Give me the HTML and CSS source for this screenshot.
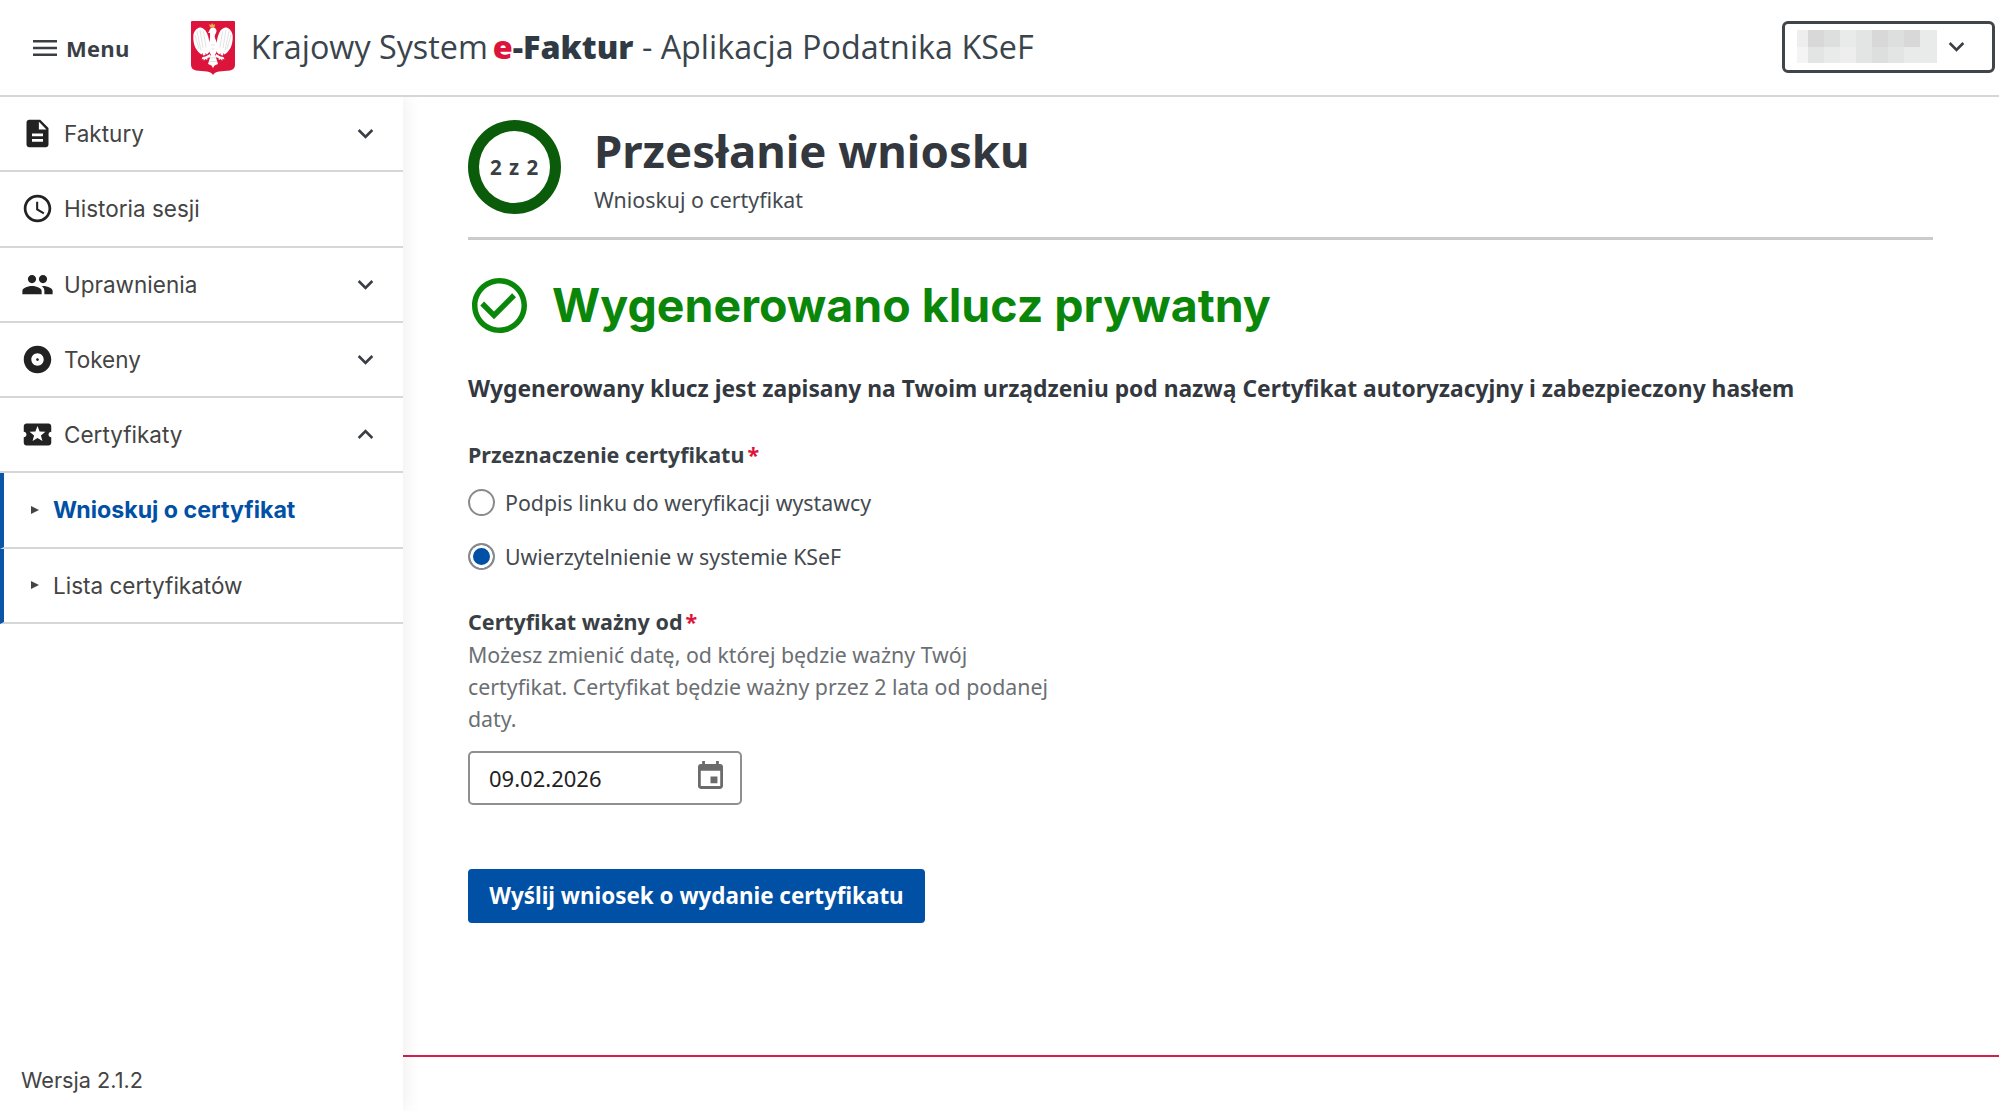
FILE: index.html
```html
<!DOCTYPE html>
<html lang="pl">
<head>
<meta charset="utf-8">
<title>Krajowy System e-Faktur</title>
<link rel="stylesheet" href="styles.css">
</head>
<body>
<div class="app">
  <header class="topbar">
    <button class="menu-btn">
      <svg class="menu-icon" viewBox="0 0 24 16"><path d="M0 0h24v2.500H0zM0 6.700h24v2.500H0zM0 13.500h24V16H0z"/></svg>
      <span>Menu</span>
    </button>
    <svg class="emblem" viewBox="0 0 44 54">
      <path class="shield" d="M1 0h42a1 1 0 0 1 1 1v43c0 3-2 5-5 5.500L28 50.500c-3 .5-5 1.500-6 3.500-1-2-3-3-6-3.500L5 49.500c-3-.5-5-2.500-5-5.500V1a1 1 0 0 1 1-1z"/>
      <path class="crown" d="M19 6.500l-.8-3.500 1.800 1 1.200-2 1.200 2 1.800-1-.8 3.500z"/>
      <g id="half">
        <path class="eagle" d="M18.500 23C18 18 17 13 14.500 9.500 13 7.500 10.500 6 8.500 6.500 5 7.500 2.500 11 2.300 15c-.2 4 .5 8.500 2.200 12 1.500 2.500 3.500 5 6 6.500l1-1.500.5 2.500 2.500-.5-.2-2 1.700 1.500 2.300-2.500z"/>
        <path class="eagle" d="M19 33l-4.500 2.500-3 .5-1 2.500 2-.8.3 2 1.700-1.800 1.700 1 .3-2L20 36z"/>
        <path class="feathers" d="M9 9l3 18M6 10.500l4 19M4 14l4 14M12.500 10.500l2.500 16"/>
      </g>
      <use href="#half" transform="matrix(-1 0 0 1 44 0)"/>
      <path class="eagle" d="M19 13c.5-1-1-1-1.800-1.200 0-.8 1-1.400 1.200-2.300.5-2 2-3 3.600-3 2 0 3.500 1.500 3.500 3.500 0 2-1.800 3.500-1.800 5.500 0 2 2.300 5 2.800 9 .4 3.500-.7 7-2.500 9l3 9.500-3.500 1.500L22 47l-1.500-2.500-3.500-1.500 3-9.500c-1.800-2-2.900-5.500-2.500-9 .4-3.500 2-6 1.500-11.500z"/>
      <path class="feathers" d="M19 37h6M18.500 40.500h7M20.500 28h3M20 24h4"/>
    </svg>
    <h1 class="app-title">Krajowy System<span class="brand"><span class="brand-e">e</span>-Faktur</span> - Aplikacja Podatnika KSeF</h1>
    <div class="account">
      <svg class="account-blur" viewBox="0 0 140 33" preserveAspectRatio="none">
        <rect class="b1" width="11" height="17"/><rect class="b5" x="11" width="16" height="17"/><rect class="b4" x="27" width="16" height="17"/><rect class="b2" x="43" width="16" height="17"/><rect class="b3" x="59" width="16" height="17"/><rect class="b5" x="75" width="16" height="17"/><rect class="b4" x="91" width="16" height="17"/><rect class="b5" x="107" width="16" height="17"/><rect class="b2" x="123" width="17" height="17"/>
        <rect class="b0" y="17" width="11" height="16"/><rect class="b3" x="11" y="17" width="16" height="16"/><rect class="b2" x="27" y="17" width="16" height="16"/><rect class="b1" x="43" y="17" width="16" height="16"/><rect class="b3" x="59" y="17" width="16" height="16"/><rect class="b4" x="75" y="17" width="16" height="16"/><rect class="b3" x="91" y="17" width="16" height="16"/><rect class="b2" x="107" y="17" width="16" height="16"/><rect class="b2" x="123" y="17" width="17" height="16"/>
      </svg>
      <svg class="chev chev-account" viewBox="0 0 24 24"><path d="M16.590 8.590L12 13.170 7.410 8.590 6 10l6 6 6-6z"/></svg>
    </div>
  </header>

  <nav class="sidebar">
    <ul class="nav-list">
      <li class="nav-item">
        <svg class="nav-icon" viewBox="0 0 24 24"><path d="M14 2H6c-1.100 0-1.990.9-1.990 2L4 20c0 1.100.89 2 1.990 2H18c1.100 0 2-.9 2-2V8l-6-6zm2 16H8v-2h8v2zm0-4H8v-2h8v2zm-3-5V3.500L18.500 9H13z"/></svg>
        <span class="nav-label">Faktury</span>
        <svg class="chev" viewBox="0 0 24 24"><path d="M16.590 8.590L12 13.170 7.410 8.590 6 10l6 6 6-6z"/></svg>
      </li>
      <li class="nav-item">
        <svg class="nav-icon" viewBox="0 0 24 24"><path d="M11.990 2C6.470 2 2 6.480 2 12s4.470 10 9.990 10C17.520 22 22 17.520 22 12S17.520 2 11.990 2zM12 20c-4.420 0-8-3.580-8-8s3.580-8 8-8 8 3.580 8 8-3.580 8-8 8zm.5-13H11v6l5.250 3.150.75-1.230-4.500-2.670z"/></svg>
        <span class="nav-label">Historia sesji</span>
      </li>
      <li class="nav-item">
        <svg class="nav-icon" viewBox="0 0 24 24"><path d="M16 11c1.660 0 2.990-1.340 2.990-3S17.660 5 16 5c-1.660 0-3 1.340-3 3s1.340 3 3 3zm-8 0c1.660 0 2.990-1.340 2.990-3S9.660 5 8 5C6.340 5 5 6.340 5 8s1.340 3 3 3zm0 2c-2.330 0-7 1.170-7 3.500V19h14v-2.500c0-2.330-4.670-3.500-7-3.500zm8 0c-.29 0-.62.02-.97.05 1.160.84 1.970 1.970 1.970 3.450V19h6v-2.500c0-2.330-4.670-3.500-7-3.500z"/></svg>
        <span class="nav-label">Uprawnienia</span>
        <svg class="chev" viewBox="0 0 24 24"><path d="M16.590 8.590L12 13.170 7.410 8.590 6 10l6 6 6-6z"/></svg>
      </li>
      <li class="nav-item">
        <svg class="nav-icon" viewBox="0 0 24 24"><path d="M12 2C6.480 2 2 6.480 2 12s4.480 10 10 10 10-4.480 10-10S17.520 2 12 2zm0 14.500c-2.490 0-4.500-2.010-4.500-4.500S9.510 7.500 12 7.500s4.500 2.010 4.500 4.500-2.010 4.500-4.500 4.500zm0-5.500c-.55 0-1 .45-1 1s.45 1 1 1 1-.45 1-1-.45-1-1-1z"/></svg>
        <span class="nav-label">Tokeny</span>
        <svg class="chev" viewBox="0 0 24 24"><path d="M16.590 8.590L12 13.170 7.410 8.590 6 10l6 6 6-6z"/></svg>
      </li>
      <li class="nav-item">
        <svg class="nav-icon" viewBox="0 0 24 24"><path d="M20 12c0-1.100.9-2 2-2V6c0-1.100-.9-2-2-2H4c-1.100 0-1.990.9-1.990 2v4c1.100 0 1.990.9 1.990 2s-.89 2-2 2v4c0 1.100.9 2 2 2h16c1.100 0 2-.9 2-2v-4c-1.100 0-2-.9-2-2zm-4.420 4.800L12 14.500l-3.580 2.300 1.080-4.120-3.290-2.690 4.240-.25L12 5.800l1.540 3.950 4.240.25-3.290 2.690 1.090 4.110z"/></svg>
        <span class="nav-label">Certyfikaty</span>
        <svg class="chev" viewBox="0 0 24 24"><path d="M12 8l-6 6 1.410 1.410L12 10.830l4.590 4.580L18 14z"/></svg>
      </li>
      <li class="nav-item sub active"><span class="tri"></span><span class="nav-label">Wnioskuj o certyfikat</span></li>
      <li class="nav-item sub"><span class="tri"></span><span class="nav-label">Lista certyfikatów</span></li>
    </ul>
    <div class="version">Wersja 2.1.2</div>
  </nav>

  <main class="main">
    <div class="content">
      <div class="step-head">
        <div class="step-ring">2 z 2</div>
        <div class="step-text">
          <h2 class="step-title">Przesłanie wniosku</h2>
          <p class="step-sub">Wnioskuj o certyfikat</p>
        </div>
      </div>
      <div class="success">
        <svg class="success-icon" viewBox="2 2 20 20"><path d="M16.590 7.580L10 14.170l-3.590-3.580L5 12l5 5 8-8zM12 2C6.480 2 2 6.480 2 12s4.480 10 10 10 10-4.480 10-10S17.520 2 12 2zm0 18c-4.420 0-8-3.580-8-8s3.580-8 8-8 8 3.580 8 8-3.580 8-8 8z"/></svg>
        <h3 class="success-title">Wygenerowano klucz prywatny</h3>
      </div>
      <p class="lead">Wygenerowany klucz jest zapisany na Twoim urządzeniu pod nazwą Certyfikat autoryzacyjny i zabezpieczony hasłem</p>

      <div class="field-label first">Przeznaczenie certyfikatu<span class="req">*</span></div>
      <div class="radio-row radio-first"><span class="radio"></span><span>Podpis linku do weryfikacji wystawcy</span></div>
      <div class="radio-row"><span class="radio on"></span><span>Uwierzytelnienie w systemie KSeF</span></div>

      <div class="field-label second">Certyfikat ważny od<span class="req">*</span></div>
      <p class="help">Możesz zmienić datę, od której będzie ważny Twój certyfikat. Certyfikat będzie ważny przez 2 lata od podanej daty.</p>
      <div class="date-input">
        <span>09.02.2026</span>
        <svg class="cal" viewBox="3 1 18 20"><path d="M17 12h-5v5h5v-5zM16 1v2H8V1H6v2H5c-1.110 0-1.990.9-1.990 2L3 19c0 1.100.89 2 2 2h14c1.100 0 2-.9 2-2V5c0-1.100-.9-2-2-2h-1V1h-2zm3 18H5V8h14v11z"/></svg>
      </div>
      <button class="submit">Wyślij wniosek o wydanie certyfikatu</button>
    </div>
    <footer class="page-foot"></footer>
  </main>
</div>
</body>
</html>
```

FILE: styles.css
```css
* { box-sizing: border-box; }
html, body { margin: 0; height: 100%; overflow: hidden; background: #fff; }
body { font-family: "Noto Sans", "Open Sans", sans-serif; color: #3a3f45; }
h1, h2, h3, p, ul { margin: 0; padding: 0; }
ul { list-style: none; }

.app {
  display: grid;
  grid-template-columns: 403px 1fr;
  grid-template-rows: 97px 1fr;
  height: 1111px;
}

.topbar {
  grid-column: 1 / 3;
  display: flex;
  align-items: center;
  border-bottom: 2px solid #d4d6d8;
  padding: 0 4px 0 33px;
  position: relative;
  z-index: 2;
  background: #fff;
}
.menu-btn {
  display: flex;
  align-items: center;
  gap: 9px;
  background: none;
  border: 0;
  padding: 0;
  font: 700 22px "Open Sans", sans-serif;
  letter-spacing: .3px;
  color: #3a3f45;
}
.menu-icon { width: 24px; height: 16px; fill: #3a3f45; }
.emblem { width: 44px; height: 54px; margin-left: 61px; flex: none; }
.shield { fill: #dc143c; }
.crown { fill: #f0b040; }
.eagle { fill: #fff; }
.feathers { fill: none; stroke: #d6d6d6; stroke-width: .7; }
.app-title {
  font: 400 32.300px/40px "Open Sans", sans-serif;
  margin: 0 0 3px 16px;
  color: #3a444c;
  white-space: nowrap;
}
.brand { font-weight: 800; color: #2f3a44; margin-left: 5px; }
.brand-e { color: #dc143c; }
.account {
  margin-left: auto;
  width: 213px;
  height: 52px;
  border: 3px solid #3f4549;
  border-radius: 6px;
  display: flex;
  align-items: center;
  padding-left: 12px;
  margin-bottom: 2px;
}
.account-blur { width: 140px; height: 33px; }
.b0 { fill: #f4f4f4; }
.b1 { fill: #eeeeee; }
.b2 { fill: #e9eaea; }
.b3 { fill: #e3e4e4; }
.b4 { fill: #dddede; }
.b5 { fill: #d8d8d8; }
.chev { width: 31px; height: 31px; fill: #3a3f45; margin-left: auto; flex: none; }
.chev-account { margin: 0 0 0 4px; }

.sidebar {
  display: flex;
  flex-direction: column;
  box-shadow: 4px 0 16px rgba(0, 0, 0, .06);
  position: relative;
  z-index: 1;
  background: #fff;
  font-family: "Inter", sans-serif;
}
.nav-item {
  height: 75.250px;
  display: flex;
  align-items: center;
  border-bottom: 2px solid #d4d6d8;
  padding: 0 22px 0 21px;
  font-size: 22.500px;
  color: #444;
}
.nav-icon { width: 33px; height: 33px; fill: #222; flex: none; margin-right: 10px; }
.nav-item.sub { border-left: 4px solid #0a55a8; padding-left: 27px; }
.nav-item.active .nav-label { font-weight: 700; font-size: 23.200px; color: #0050a5; }
.tri {
  width: 0;
  height: 0;
  border-left: 8px solid #444;
  border-top: 4.500px solid transparent;
  border-bottom: 4.500px solid transparent;
  margin-right: 14px;
}
.version { margin-top: auto; padding: 0 21px 18px; font-size: 21.700px; color: #444; }

.main { display: flex; flex-direction: column; min-width: 0; }
.content { padding: 23px 66px 0 65px; flex: 1; }
.step-head {
  display: flex;
  align-items: center;
  gap: 33px;
  padding-bottom: 23px;
  border-bottom: 3px solid #c9cbcd;
}
.step-ring {
  width: 93px;
  height: 94px;
  border: 11px solid #0a5c0a;
  border-radius: 50%;
  display: flex;
  align-items: center;
  justify-content: center;
  font-weight: 700;
  font-size: 20.500px;
  letter-spacing: 1px;
  flex: none;
}
.step-title { font: 700 45.500px/50px "Noto Sans", sans-serif; color: #33383f; margin-top: 5px; }
.step-sub { font-size: 21.330px; line-height: 28px; margin-top: 11px; color: #444a50; }

.success { display: flex; align-items: center; gap: 25px; margin: 37px 0 0 4px; }
.success-icon { width: 55px; height: 55px; fill: #0a870a; flex: none; }
.success-title { font: 700 46.500px/56px "Inter", sans-serif; color: #0a870a; white-space: nowrap; }

.lead { font-weight: 700; font-size: 22.800px; line-height: 32px; margin-top: 40px; color: #33383f; white-space: nowrap; }
.field-label { font-weight: 700; font-size: 21.500px; line-height: 32px; color: #3a3f45; }
.field-label.first { margin-top: 34px; }
.field-label.second { margin-top: 22px; }
.req { color: #dc143c; margin-left: 3px; }
.radio-row { display: flex; align-items: center; gap: 10px; height: 54px; font-size: 21.330px; color: #444a50; }
.radio-first { margin-top: 4.500px; }
.radio {
  width: 27px;
  height: 27px;
  border-radius: 50%;
  border: 2px solid #8a8a8a;
  flex: none;
  background: #fff;
}
.radio.on { background: #0050a5; box-shadow: inset 0 0 0 3px #fff; }
.help { width: 590px; margin-top: 1px; font-size: 21.330px; line-height: 32px; color: #6b6f73; }
.date-input {
  width: 274px;
  height: 54px;
  margin-top: 16px;
  border: 2px solid #8f8f8f;
  border-radius: 5px;
  display: flex;
  align-items: center;
  justify-content: space-between;
  padding: 0 17px 0 19px;
  font-size: 22px;
  color: #222;
}
.cal { width: 25px; height: 28px; fill: #6b6b6b; margin-bottom: 6px; }
.submit {
  display: block;
  width: 457px;
  height: 54px;
  margin-top: 64px;
  background: #0050a5;
  color: #fff;
  border: 0;
  border-radius: 4px;
  font: 700 22.400px "Noto Sans", sans-serif;
}
.page-foot { height: 56px; border-top: 2px solid #d4204f; }
```
